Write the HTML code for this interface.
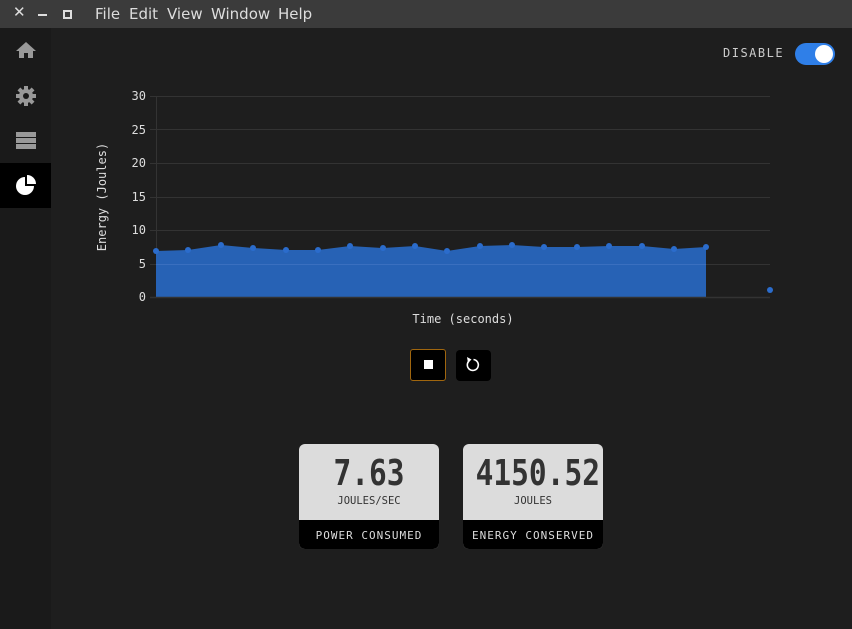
<!DOCTYPE html>
<html><head><style>
*{margin:0;padding:0;box-sizing:border-box}
body{width:852px;height:629px;background:#1e1e1e;font-family:"Liberation Sans",sans-serif;overflow:hidden;position:relative}
.tb{position:absolute;left:0;top:0;width:852px;height:28px;background:#3b3b3b;color:#ddd;font-family:"DejaVu Sans",sans-serif;font-size:15px}
.tb span{position:absolute;top:5px}
.side{position:absolute;left:0;top:28px;width:51px;height:601px;background:#1a1a1a}
.mono{font-family:"DejaVu Sans Mono","Liberation Mono",monospace}
.card{position:absolute;top:444px;width:140px;height:105px;border-radius:6px;overflow:hidden;background:#dcdcdc}
.card .v{position:absolute;top:9px;width:100%;text-align:center;font-size:36px;line-height:42px;color:#333;font-weight:bold;transform:scaleX(0.82)}
.card .u{position:absolute;top:51px;width:100%;text-align:center;font-size:10.5px;color:#333}
.card .b{position:absolute;top:76px;left:0;width:100%;height:29px;background:#000;color:#ddd;font-size:11px;text-align:center;line-height:31px;letter-spacing:1px}
</style></head><body>
<div class="tb">
<span style="left:13px;top:3px;font-size:15px;font-weight:bold">✕</span>
<span style="left:38px;top:14px;width:9px;height:2px;background:#ddd"></span>
<span style="left:63px;top:10px;width:9px;height:9px;border:2px solid #ddd"></span>
<span style="left:95px">File</span><span style="left:129px">Edit</span><span style="left:167px">View</span><span style="left:211px">Window</span><span style="left:278px">Help</span>
</div>
<div class="side">
<svg width="51" height="601" style="position:absolute;left:0;top:0">
<g fill="#999">
<path d="M16 23 L26 14 L36 23 L33 23 L33 30 L28 30 L28 25 L24 25 L24 30 L19 30 L19 23Z"/>
<circle cx="26" cy="68" r="7"/>
<g transform="translate(26,68)">
<rect x="-2" y="-10" width="4" height="20"/><rect x="-2" y="-10" width="4" height="20" transform="rotate(45)"/><rect x="-2" y="-10" width="4" height="20" transform="rotate(90)"/><rect x="-2" y="-10" width="4" height="20" transform="rotate(135)"/>
</g>
<rect x="16" y="104" width="20" height="5"/><rect x="16" y="110" width="20" height="5"/><rect x="16" y="116" width="20" height="5"/>
</g>
<circle cx="26" cy="68" r="3" fill="#1a1a1a"/>
<rect x="0" y="135" width="51" height="45" fill="#000"/>
<path d="M25 149 A9 9 0 1 0 34 158 L25 158Z" fill="#fff"/>
<path d="M27 147 A9 9 0 0 1 36 156 L27 156Z" fill="#fff"/>
</svg>
</div>
<div class="mono" style="position:absolute;left:723px;top:46px;color:#ccc;font-size:12px;letter-spacing:1.5px">DISABLE</div>
<div style="position:absolute;left:795px;top:43px;width:40px;height:22px;border-radius:11px;background:#2f7fe8"></div>
<div style="position:absolute;left:815px;top:45px;width:18px;height:18px;border-radius:9px;background:#fff"></div>
<svg width="852" height="629" style="position:absolute;left:0;top:0" font-family="DejaVu Sans Mono,monospace" font-size="12" fill="#ddd">
<g stroke="#333" stroke-width="1">
<line x1="150" y1="96.5" x2="770" y2="96.5"/><line x1="150" y1="129.5" x2="770" y2="129.5"/><line x1="150" y1="163.5" x2="770" y2="163.5"/><line x1="150" y1="197.5" x2="770" y2="197.5"/><line x1="150" y1="230.5" x2="770" y2="230.5"/><line x1="150" y1="264.5" x2="770" y2="264.5"/>
<line x1="156.5" y1="96" x2="156.5" y2="297"/>
</g>
<path d="M156 251 L188 250 L221 245 L253 248 L286 250 L318 250 L350 246 L383 248 L415 246 L447 251 L480 246 L512 245 L544 247 L577 247 L609 246 L642 246 L674 249 L706 247 L706 297 L156 297Z" fill="#2762b5"/>
<line x1="156" y1="264.5" x2="706" y2="264.5" stroke="#3a6fbf" stroke-width="1"/>
<line x1="150" y1="297.5" x2="770" y2="297.5" stroke="#333" stroke-width="1.5"/>
<g fill="#2b6ccc">
<circle cx="156" cy="251" r="3"/><circle cx="188" cy="250" r="3"/><circle cx="221" cy="245" r="3"/><circle cx="253" cy="248" r="3"/><circle cx="286" cy="250" r="3"/><circle cx="318" cy="250" r="3"/><circle cx="350" cy="246" r="3"/><circle cx="383" cy="248" r="3"/><circle cx="415" cy="246" r="3"/><circle cx="447" cy="251" r="3"/><circle cx="480" cy="246" r="3"/><circle cx="512" cy="245" r="3"/><circle cx="544" cy="247" r="3"/><circle cx="577" cy="247" r="3"/><circle cx="609" cy="246" r="3"/><circle cx="642" cy="246" r="3"/><circle cx="674" cy="249" r="3"/><circle cx="706" cy="247" r="3"/><circle cx="770" cy="290" r="3"/>
</g>
<g text-anchor="end">
<text x="146" y="100">30</text><text x="146" y="134">25</text><text x="146" y="167">20</text><text x="146" y="201">15</text><text x="146" y="234">10</text><text x="146" y="268">5</text><text x="146" y="301">0</text>
</g>
<text x="463" y="323" text-anchor="middle">Time (seconds)</text>
<text transform="translate(106,197) rotate(-90)" text-anchor="middle">Energy (Joules)</text>
</svg>
<div style="position:absolute;left:410px;top:349px;width:36px;height:32px;background:#000;border:1px solid #a0660e;border-radius:3px"></div>
<div style="position:absolute;left:424px;top:360px;width:9px;height:9px;background:#fff"></div>
<div style="position:absolute;left:456px;top:350px;width:35px;height:31px;background:#000;border-radius:4px"></div>
<svg width="35" height="31" style="position:absolute;left:456px;top:350px"><path d="M13 11 A5.5 5.5 0 1 0 17.5 9.5" fill="none" stroke="#fff" stroke-width="1.6"/><path d="M11 7 L15.5 9.5 L12 13Z" fill="#fff"/></svg>
<div class="card mono" style="left:299px"><div class="v">7.63</div><div class="u">JOULES/SEC</div><div class="b">POWER CONSUMED</div></div>
<div class="card mono" style="left:463px"><div class="v">4150.52</div><div class="u">JOULES</div><div class="b">ENERGY CONSERVED</div></div>
</body></html>
